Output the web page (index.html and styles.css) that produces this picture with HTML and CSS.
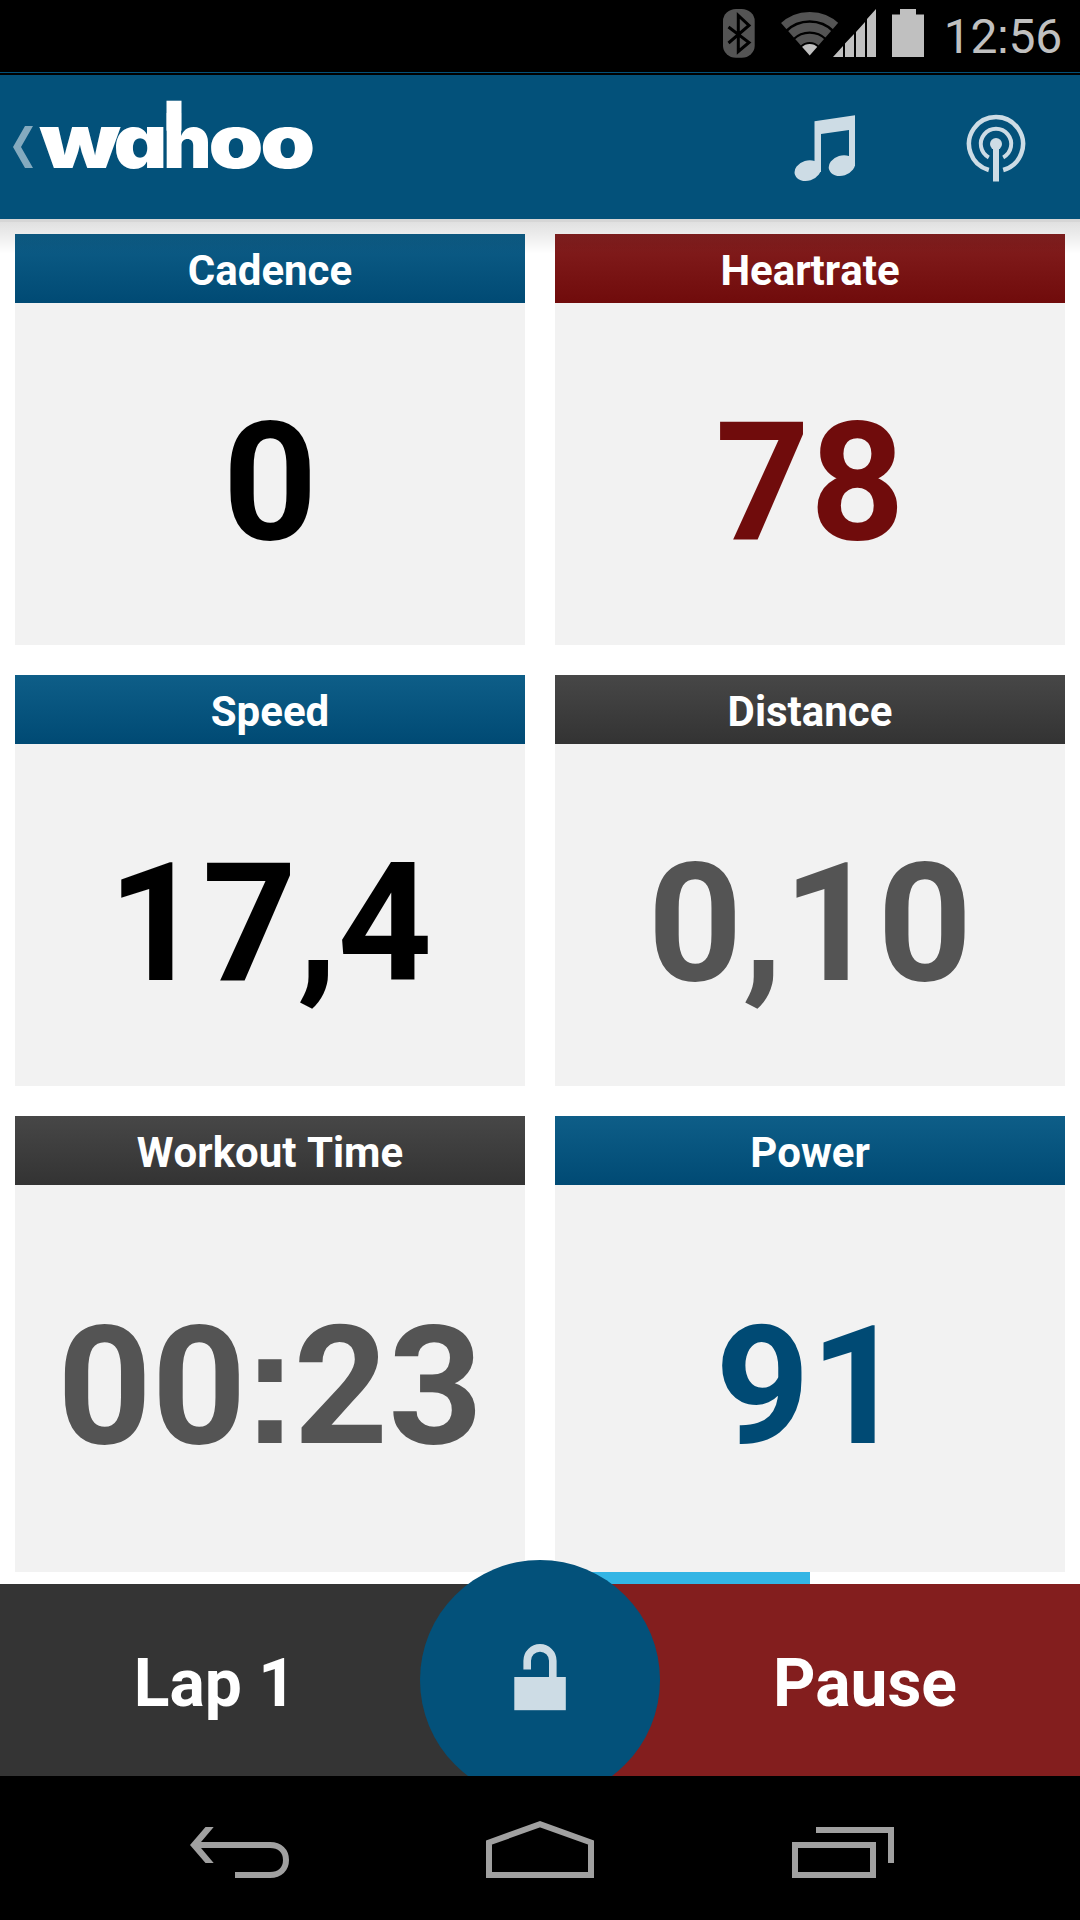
FILE: index.html
```html
<!DOCTYPE html>
<html lang="en">
<head>
    <meta charset="UTF-8">
    <meta name="viewport" content="width=device-width, initial-scale=1.0">
    <title>Wahoo Workout</title>
    <link rel="stylesheet" href="styles.css">
</head>
<body>
    <div class="screen">
        <!-- Status bar -->
        <div class="status-bar">
            <svg class="status-icons" width="204" height="60" viewBox="722 0 204 60">
                <rect x="723" y="9" width="31.7" height="48.7" rx="13" ry="12" fill="#545454"/>
                <path d="M728.5 27L749 42.5L738.3 51.5V15.5L749 25.5L728.5 43" fill="none" stroke="#000" stroke-width="3"/>
                <clipPath id="wifiFan"><path d="M809.7 55.5L774 15V0H845V15Z"/></clipPath>
                <g clip-path="url(#wifiFan)" fill="none">
                    <circle cx="809.7" cy="55.5" r="39.4" stroke="#545454" stroke-width="8.2"/>
                    <circle cx="809.7" cy="55.5" r="28.4" stroke="#545454" stroke-width="8.6"/>
                    <circle cx="809.7" cy="55.5" r="17.6" stroke="#545454" stroke-width="8.4"/>
                    <circle cx="809.7" cy="55.5" r="11.5" fill="#c0c0c0"/>
                </g>
                <path d="M833 57L843 46V57ZM845 43.5L854 34V57H845ZM856 32L865 22V57H856ZM867 19L876 9V57H867Z" fill="#c0c0c0"/>
                <path d="M900 9H916V14.5H924V57H892V14.5H900Z" fill="#c0c0c0"/>
            </svg>
            <span class="clock">12<span class="colon">:</span>56</span>
        </div>

        <!-- App bar -->
        <header class="app-bar">
            <svg class="brand" width="330" height="130" viewBox="0 75 330 130">
                <path d="M25 126H33L21 147L33 168H25L13 147Z" fill="#84aabf"/>
                <rect x="166.5" y="100.7" width="15" height="30" fill="#fff"/>
                <text class="logo" y="167.5"><tspan x="39.5" textLength="81" lengthAdjust="spacingAndGlyphs">w</tspan><tspan x="113.5" textLength="54" lengthAdjust="spacingAndGlyphs">a</tspan><tspan x="163">h</tspan><tspan x="208.5" textLength="55" lengthAdjust="spacingAndGlyphs">o</tspan><tspan x="260.3" textLength="55" lengthAdjust="spacingAndGlyphs">o</tspan></text>
            </svg>
            <div class="actions">
                <svg width="62" height="70" viewBox="794 112 62 70" fill="#cddce5">
                    <path d="M814.5 121.3L855 115.3V166H849V130L821 134V172H814.5Z"/>
                    <ellipse cx="807.7" cy="170.6" rx="13.4" ry="10" transform="rotate(-17 807.7 170.6)"/>
                    <ellipse cx="841.9" cy="165.6" rx="13.4" ry="10" transform="rotate(-17 841.9 165.6)"/>
                </svg>
                <svg width="60" height="70" viewBox="966 112 60 70" fill="none" stroke="#cddce5" stroke-width="4.5">
                    <path d="M988.8 170A27 27 0 1 1 1003.2 170"/>
                    <path d="M988.8 157.4A15.2 15.2 0 1 1 1003.2 157.4" stroke-width="4"/>
                    <circle cx="996" cy="144" r="6" fill="#cddce5" stroke="none"/>
                    <path d="M996 144V181.5" stroke-width="6"/>
                </svg>
            </div>
        </header>

        <!-- Workout data -->
        <main class="grid">
            <section class="card">
                <h2 class="blue">Cadence</h2>
                <div class="value black">0</div>
            </section>
            <section class="card">
                <h2 class="red">Heartrate</h2>
                <div class="value dark-red">78</div>
            </section>
            <section class="card">
                <h2 class="blue">Speed</h2>
                <div class="value black">17,4</div>
            </section>
            <section class="card">
                <h2 class="gray">Distance</h2>
                <div class="value dark-gray">0,10</div>
            </section>
            <section class="card">
                <h2 class="gray">Workout Time</h2>
                <div class="value dark-gray"><span>00<span class="colon">:</span>23</span></div>
            </section>
            <section class="card">
                <h2 class="blue">Power</h2>
                <div class="value dark-blue">91</div>
            </section>
        </main>
        <div class="pager"><div class="pager-tab"></div></div>

        <!-- Lap / lock / pause -->
        <div class="controls">
            <button class="lap">Lap 1</button>
            <button class="pause">Pause</button>
            <div class="lock-area">
                <div class="lock">
                    <svg width="52" height="68" viewBox="514 1643 52 68">
                        <path d="M527.2 1669.5V1660.7A12.8 12.8 0 0 1 552.8 1660.7V1678" fill="none" stroke="#cddce5" stroke-width="7.6"/>
                        <rect x="514.3" y="1677" width="51.5" height="33.2" fill="#cddce5"/>
                    </svg>
                </div>
            </div>
        </div>

        <!-- Navigation bar -->
        <nav class="nav-bar">
            <svg width="100" height="60" viewBox="190 1820 100 60">
                <path d="M190 1845L205.5 1827H213.7L198.5 1845L213.7 1863H205.5Z" fill="#a0a0a0"/>
                <path d="M197 1845H270C280 1845 286 1851 286 1860S280 1875 270 1875H235" fill="none" stroke="#a0a0a0" stroke-width="6"/>
            </svg>
            <svg width="110" height="60" viewBox="486 1820 110 60">
                <path d="M489 1875V1842.5L540 1824.2L591 1842.5V1875Z" fill="none" stroke="#a0a0a0" stroke-width="6"/>
            </svg>
            <svg width="102" height="60" viewBox="792 1820 102 60">
                <path d="M795 1845H873V1875H795ZM816 1830H891V1863" fill="none" stroke="#a0a0a0" stroke-width="6"/>
            </svg>
        </nav>
    </div>
</body>
</html>
```
FILE: styles.css
```css
* {
    margin: 0;
    padding: 0;
    box-sizing: border-box;
}

body {
    font-family: Roboto, sans-serif;
    font-kerning: none;
    background-color: #ffffff;
}

.screen {
    width: 1080px;
    height: 1920px;
    display: flex;
    flex-direction: column;
    overflow: hidden;
}

.status-bar {
    height: 75px;
    flex: none;
    display: flex;
    justify-content: flex-end;
    gap: 18px;
    padding-right: 18px;
    background: linear-gradient(#000 72px, #03517a 72px, #03517a 73px, #000 73px);
}

.clock {
    font-size: 48px;
    line-height: 73px;
    letter-spacing: -0.2px;
    color: #c0c0c0;
}

/* Square dots */
.colon {
    font-family: "Liberation Sans", sans-serif;
    line-height: 0;
    margin: 0 -1px;
}

.value .colon {
    margin: 0 -4px;
}

.app-bar {
    height: 144px;
    flex: none;
    display: flex;
    justify-content: space-between;
    align-items: flex-start;
    background-color: #03517a;
    position: relative;
}

/* Drop shadow that falls over the first row of cards */
.app-bar::after {
    content: "";
    position: absolute;
    top: 100%;
    left: 0;
    right: 0;
    height: 35px;
    background: linear-gradient(rgba(0, 0, 0, 0.16) 3px, rgba(0, 0, 0, 0.12) 3px, rgba(0, 0, 0, 0));
}

.logo {
    font-family: Inter, sans-serif;
    font-weight: 900;
    font-size: 75px;
    font-feature-settings: "cv11";
    fill: #ffffff;
}

.actions {
    display: flex;
    gap: 110px;
    padding-right: 54px;
    margin-top: 37px;
}

.grid {
    display: grid;
    grid-template-columns: 1fr 1fr;
    grid-template-rows: 411px 411px 456px;
    gap: 30px;
    padding: 15px 15px 0;
}

.card {
    display: flex;
    flex-direction: column;
    background-color: #f2f2f2;
}

.card h2 {
    height: 69px;
    padding-top: 4px;
    font-size: 42px;
    line-height: 65px;
    text-align: center;
    color: #ffffff;
}

.blue {
    background: linear-gradient(#0e5e88, #004a74);
}

.red {
    background: linear-gradient(#841f1f, #700b0b);
}

.gray {
    background: linear-gradient(#474747, #333333);
}

.value {
    flex: 1;
    display: flex;
    justify-content: center;
    align-items: center;
    padding-top: 16px;
    font-size: 165px;
    font-weight: bold;
}

.black {
    color: #000000;
}

.dark-red {
    color: #700c0c;
}

.dark-gray {
    color: #545454;
}

.dark-blue {
    color: #004a74;
}

.pager {
    height: 12px;
    flex: none;
    padding-left: 540px;
}

.pager-tab {
    width: 270px;
    height: 12px;
    background-color: #33b5e5;
}

.controls {
    height: 192px;
    flex: none;
    display: flex;
    position: relative;
}

.controls button {
    flex: 1;
    padding-top: 6px;
    border: none;
    font-family: inherit;
    font-size: 66px;
    font-weight: bold;
    color: #ffffff;
}

.controls .lap {
    padding-right: 112px;
    background-color: #343434;
}

.controls .pause {
    padding-left: 108px;
    background-color: #831e1e;
}

/* Lock circle sits over both buttons and is cut by the navigation bar */
.lock-area {
    position: absolute;
    left: 420px;
    bottom: 0;
    width: 240px;
    height: 216px;
    overflow: hidden;
}

.lock {
    width: 240px;
    height: 240px;
    border-radius: 50%;
    background-color: #03517a;
    display: flex;
    justify-content: center;
    padding-top: 83px;
}

.nav-bar {
    flex: 1;
    display: flex;
    justify-content: space-between;
    padding: 44px 186px 0 190px;
    background-color: #000000;
}
```
